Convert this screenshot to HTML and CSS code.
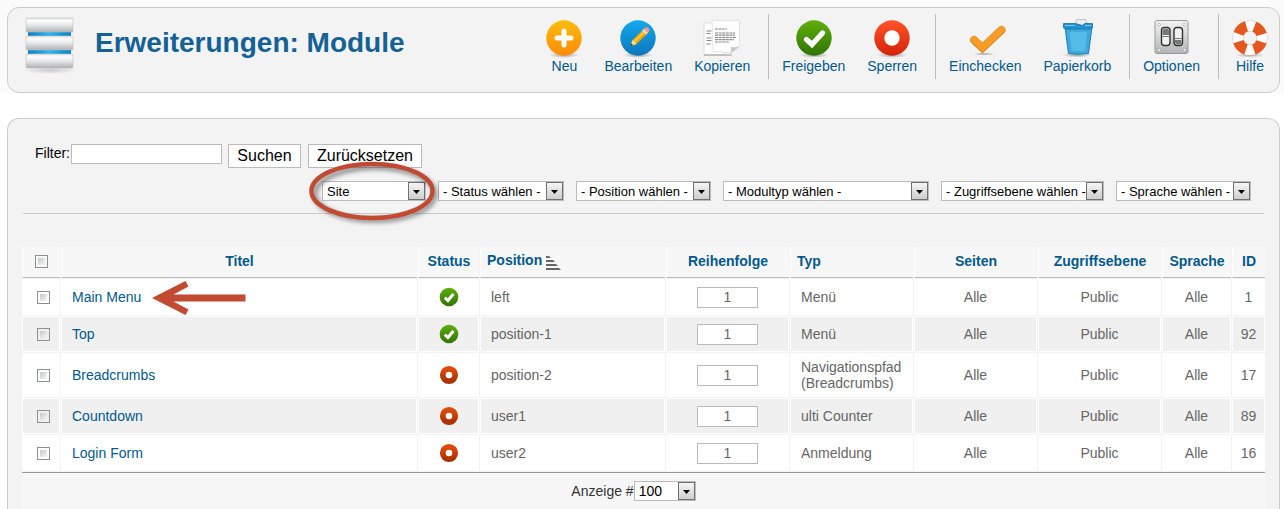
FILE: index.html
```
<!doctype html>
<html lang="de-de">
  <head>
    <meta charset="utf-8">
    <meta name="viewport" content="width=device-width">
    <title>Erweiterungen: Module</title>
    <link rel="stylesheet" href="styles.css">
  </head>
  <body>
    <svg class="defs" width="0" height="0">
      <defs>
        <linearGradient id="g-orange" x1="0" y1="0" x2="0" y2="1"><stop offset="0" stop-color="#ffbd0a"/><stop offset="1" stop-color="#ff8a06"/></linearGradient>
        <linearGradient id="g-blue" x1="0" y1="0" x2="0" y2="1"><stop offset="0" stop-color="#13a9ec"/><stop offset="1" stop-color="#0b76bd"/></linearGradient>
        <linearGradient id="g-green" x1="0" y1="0" x2="0" y2="1"><stop offset="0" stop-color="#5fae0c"/><stop offset="1" stop-color="#2f7403"/></linearGradient>
        <linearGradient id="g-red" x1="0" y1="0" x2="0" y2="1"><stop offset="0" stop-color="#ff5328"/><stop offset="1" stop-color="#d42208"/></linearGradient>
        <linearGradient id="g-rust" x1="0" y1="0" x2="0" y2="1"><stop offset="0" stop-color="#de4a08"/><stop offset="1" stop-color="#ab3204"/></linearGradient>
        <linearGradient id="g-metal" x1="0" y1="0" x2="0" y2="1"><stop offset="0" stop-color="#f4f4f4"/><stop offset="1" stop-color="#b2b4b5"/></linearGradient>
        <linearGradient id="g-bar" x1="0" y1="0" x2="0" y2="1"><stop offset="0" stop-color="#e4e4e4"/><stop offset=".2" stop-color="#fdfdfd"/><stop offset=".5" stop-color="#e6e7e8"/><stop offset="1" stop-color="#adb0b3"/></linearGradient>
        <linearGradient id="g-gap" x1="0" y1="0" x2="1" y2="0"><stop offset="0" stop-color="#0a80c4"/><stop offset=".5" stop-color="#2fb4ee"/><stop offset="1" stop-color="#0a80c4"/></linearGradient>
        <radialGradient id="g-shadow"><stop offset="0" stop-color="#888" stop-opacity=".8"/><stop offset="1" stop-color="#888" stop-opacity="0"/></radialGradient>
        <symbol id="published" viewBox="0 0 20 20"><circle cx="10" cy="10" r="9.3" fill="url(#g-green)"/><path d="M5.8 10.7 8.9 13.5 14.4 7" fill="none" stroke="#fff" stroke-width="3"/></symbol>
        <symbol id="unpublished" viewBox="0 0 20 20"><circle cx="10" cy="10" r="6.2" fill="#fff" stroke="url(#g-rust)" stroke-width="5.8"/></symbol>
      </defs>
    </svg>

    <div id="toolbar-box">
      <header class="header">
        <svg class="logo" width="54" height="62" viewBox="0 0 54 62">
          <ellipse cx="28" cy="54" rx="27" ry="4" fill="url(#g-shadow)" opacity=".5"/>
          <path d="M6 15h43v5H6zM6 33h43v5H6z" fill="url(#g-gap)"/>
          <rect x="4" y="2" width="47" height="14" rx="1" fill="url(#g-bar)" stroke="#c0c2c4" stroke-width=".6"/>
          <rect x="4" y="20" width="47" height="14" rx="1" fill="url(#g-bar)" stroke="#c0c2c4" stroke-width=".6"/>
          <rect x="4" y="38" width="47" height="14" rx="1" fill="url(#g-bar)" stroke="#c0c2c4" stroke-width=".6"/>
        </svg>
        <h1>Erweiterungen: Module</h1>
        <nav class="toolbar">
          <a href="#">
            <svg width="36" height="38" viewBox="0 0 36 38"><ellipse cx="18" cy="35" rx="15" ry="3" fill="url(#g-shadow)"/><circle cx="18" cy="18" r="17.7" fill="url(#g-orange)"/><path d="M18 11v14M11 18h14" stroke="#fff" stroke-width="5" stroke-linecap="round"/></svg>
            Neu</a>
          <a href="#">
            <svg width="36" height="38" viewBox="0 0 36 38"><ellipse cx="18" cy="35" rx="15" ry="3" fill="url(#g-shadow)"/><circle cx="18" cy="18" r="17.7" fill="url(#g-blue)"/><path d="M10.5 26l2-6L24 9l4 4-11.500 11z" fill="#f6a800"/><path d="M14 22 25.500 10.500" stroke="#ffd34d" stroke-width="1.500"/><path d="M23 9.500l2-2q2-1 3.500.8t.5 3.500l-2 2z" fill="#ee9c8c"/><path d="M22 10.500l1.500-1.500 4 4-1.500 1.500z" fill="#dcdcdc"/><path d="M10.500 26l2-6 4 4z" fill="#f8dba0"/><path d="M10.500 26l.8-2.500 1.700 1.600z" fill="#222"/></svg>
            Bearbeiten</a>
          <a href="#">
            <svg width="36" height="38" viewBox="0 0 36 38"><path d="M0 3h20v32H0z" fill="#fff" stroke="#ddd"/><path d="M0 35h28" stroke="#999"/><path d="M2.500 11h5M2.500 13.500h4M2.500 18h5M2.500 20.500h5M2.500 24h4" stroke="#888" stroke-width="1.200"/><path d="M8 .5h27.500V26q-3 4-9 7-9-2-17.500-1z" fill="#fdfdfd" stroke="#ddd" stroke-width=".8"/><path d="M26 33q2-4 .5-6 5 1 9-1-3 4-9.500 7z" fill="#c8c8c8"/><path d="M11 9h12M11 13h20M11 15.200h20M11 17.500h21M11 19.700h19M11 22h14" stroke="#8a8a8a" stroke-width="1.200" stroke-dasharray="3 .6"/></svg>
            Kopieren</a>
          <span class="divider"></span>
          <a href="#">
            <svg width="36" height="38" viewBox="0 0 36 38"><ellipse cx="18" cy="35" rx="15" ry="3" fill="url(#g-shadow)"/><circle cx="18" cy="18" r="17.700" fill="url(#g-green)"/><path d="M10.500 19.500 16 24.500 26.500 13" fill="none" stroke="#fff" stroke-width="5.200" stroke-linecap="round"/></svg>
            Freigeben</a>
          <a href="#">
            <svg width="36" height="38" viewBox="0 0 36 38"><ellipse cx="18" cy="35" rx="15" ry="3" fill="url(#g-shadow)"/><circle cx="18" cy="18" r="17.700" fill="url(#g-red)"/><circle cx="18" cy="18" r="7.700" fill="#fff"/></svg>
            Sperren</a>
          <span class="divider"></span>
          <a href="#">
            <svg width="36" height="38" viewBox="0 0 36 38"><ellipse cx="17" cy="34" rx="11" ry="1.500" fill="url(#g-shadow)"/><path d="M7 20 15.500 28 34.500 10" fill="none" stroke="#e08a1c" stroke-width="8" stroke-linecap="round"/><path d="M7 19.500 15.500 27.500 34.500 9.500" fill="none" stroke="#fa9d28" stroke-width="6.500" stroke-linecap="round"/></svg>
            Einchecken</a>
          <a href="#">
            <svg width="36" height="38" viewBox="0 0 36 38"><ellipse cx="18" cy="35" rx="15" ry="2.500" fill="url(#g-shadow)"/><path d="M16 5 18-1l4 1 4-1 4 7z" fill="#eee" stroke="#aaa" stroke-width=".7"/><path d="M6 7h27l-3.500 26.500q-10 1.500-20 0z" fill="#3fa9de" stroke="#1b80b8"/><path d="M10.500 12h17.500l-2 19H12.500z" fill="#55bbe9"/><path d="M4.500 3.500h12l7 2 2-2h8v4.500l-2 1h-25l-2-1z" fill="#2492cc" stroke="#176fa5" stroke-width=".8"/><path d="M6 5.500h10M26 5.500h6" stroke="#72ccf3"/></svg>
            Papierkorb</a>
          <span class="divider"></span>
          <a href="#">
            <svg width="36" height="38" viewBox="0 0 36 38"><rect x="1" y=".5" width="33" height="33" rx="2" fill="url(#g-metal)" stroke="#999"/><g fill="#fafafa" stroke="#999" stroke-width=".6"><circle cx="5" cy="4.500" r="1.500"/><circle cx="30.500" cy="4.500" r="1.500"/><circle cx="5" cy="30" r="1.500"/><circle cx="30.500" cy="30" r="1.500"/></g><g fill="#f2f2f2" stroke="#333" stroke-width="1.400"><rect x="7.500" y="7.500" width="8.500" height="18" rx="3"/><rect x="20" y="7.500" width="8.500" height="18" rx="3"/></g><path d="M8.500 10q3.500-3 6.500 0v5h-6.500zM21 20h6.500v3q-3 3.500-6.500 0z" fill="#777"/><path d="M8 16.500h7.500M20.500 18.500h7.500" stroke="#777"/></svg>
            Optionen</a>
          <span class="divider"></span>
          <a href="#">
            <svg width="36" height="38" viewBox="0 0 36 38"><ellipse cx="18" cy="35" rx="14" ry="2.500" fill="url(#g-shadow)"/><circle cx="18" cy="18" r="12" fill="none" stroke="#c4c4c4" stroke-width="11"/><circle cx="18" cy="18" r="12" fill="none" stroke="#fff" stroke-width="10"/><circle cx="18" cy="18" r="12.200" fill="none" stroke="#e4571f" stroke-width="10.500" stroke-dasharray="11.160 8" stroke-dashoffset="-4"/></svg>
            Hilfe</a>
        </nav>
      </header>
    </div>

    <main class="element-box">
      <form id="filter-bar">
        <div class="filter-search">
          <label for="filter_search">Filter:</label>
          <input type="text" id="filter_search">
          <button type="button" class="search">Suchen</button>
          <button type="button" class="reset">Zurücksetzen</button>
        </div>
        <div class="filter-select">
          <div class="marked">
            <select class="w-site" aria-label="Bereich"><option>Site</option></select>
            <svg class="ring" width="136" height="70" viewBox="0 0 136 70">
              <ellipse cx="69" cy="37" rx="60" ry="26.500" fill="none" stroke="#000" stroke-opacity=".4" stroke-width="5" class="ring-shadow"/>
              <ellipse cx="66" cy="34" rx="60.500" ry="27" fill="none" stroke="#c14b32" stroke-width="4.500"/>
            </svg>
          </div>
          <select class="w-status" aria-label="Status"><option>- Status wählen -</option></select>
          <select class="w-position" aria-label="Position"><option>- Position wählen -</option></select>
          <select class="w-type" aria-label="Modultyp"><option>- Modultyp wählen -</option></select>
          <select class="w-access" aria-label="Zugriffsebene"><option>- Zugriffsebene wählen -</option></select>
          <select class="w-language" aria-label="Sprache"><option>- Sprache wählen -</option></select>
        </div>
      </form>

      <table class="adminlist">
        <colgroup>
          <col class="c-check"><col><col class="c-status"><col class="c-position"><col class="c-wide"><col class="c-wide"><col class="c-wide"><col class="c-wide"><col class="c-lang"><col class="c-id">
        </colgroup>
        <thead>
          <tr>
            <th><input type="checkbox" aria-label="Alle auswählen"></th>
            <th><a href="#">Titel</a></th>
            <th><a href="#">Status</a></th>
            <th class="left"><a href="#">Position <svg width="15" height="14" viewBox="0 0 15 14"><path d="M0 0h3l2 2H0zM0 4h7l2 2H0zM0 8h10l2 2H0zM0 12h13l2 2H0z" fill="#666"/></svg></a></th>
            <th><a href="#">Reihenfolge</a></th>
            <th class="left"><a href="#">Typ</a></th>
            <th><a href="#">Seiten</a></th>
            <th><a href="#">Zugriffsebene</a></th>
            <th><a href="#">Sprache</a></th>
            <th><a href="#">ID</a></th>
          </tr>
        </thead>
        <tbody>
          <tr>
            <td class="check"><input type="checkbox" aria-label="Main Menu"></td>
            <td class="title">
              <a href="#">Main Menu</a>
              <svg class="pointer" width="94" height="36" viewBox="0 0 94 36"><path d="M0 18 33.500 1l3 5.500L21.500 14.500H93.500v7H21.500l15 8-3 5.500z" fill="#c14b32"/></svg>
            </td>
            <td class="center"><a href="#" aria-label="Freigegeben"><svg width="20" height="20"><use href="#published"/></svg></a></td>
            <td>left</td>
            <td class="center"><input type="text" class="order" value="1" aria-label="Reihenfolge"></td>
            <td>Menü</td>
            <td class="center">Alle</td>
            <td class="center">Public</td>
            <td class="center">Alle</td>
            <td class="center">1</td>
          </tr>
          <tr>
            <td class="check"><input type="checkbox" aria-label="Top"></td>
            <td class="title"><a href="#">Top</a></td>
            <td class="center"><a href="#" aria-label="Freigegeben"><svg width="20" height="20"><use href="#published"/></svg></a></td>
            <td>position-1</td>
            <td class="center"><input type="text" class="order" value="1" aria-label="Reihenfolge"></td>
            <td>Menü</td>
            <td class="center">Alle</td>
            <td class="center">Public</td>
            <td class="center">Alle</td>
            <td class="center">92</td>
          </tr>
          <tr>
            <td class="check"><input type="checkbox" aria-label="Breadcrumbs"></td>
            <td class="title"><a href="#">Breadcrumbs</a></td>
            <td class="center"><a href="#" aria-label="Gesperrt"><svg width="20" height="20"><use href="#unpublished"/></svg></a></td>
            <td>position-2</td>
            <td class="center"><input type="text" class="order" value="1" aria-label="Reihenfolge"></td>
            <td>Navigationspfad (Breadcrumbs)</td>
            <td class="center">Alle</td>
            <td class="center">Public</td>
            <td class="center">Alle</td>
            <td class="center">17</td>
          </tr>
          <tr>
            <td class="check"><input type="checkbox" aria-label="Countdown"></td>
            <td class="title"><a href="#">Countdown</a></td>
            <td class="center"><a href="#" aria-label="Gesperrt"><svg width="20" height="20"><use href="#unpublished"/></svg></a></td>
            <td>user1</td>
            <td class="center"><input type="text" class="order" value="1" aria-label="Reihenfolge"></td>
            <td>ulti Counter</td>
            <td class="center">Alle</td>
            <td class="center">Public</td>
            <td class="center">Alle</td>
            <td class="center">89</td>
          </tr>
          <tr>
            <td class="check"><input type="checkbox" aria-label="Login Form"></td>
            <td class="title"><a href="#">Login Form</a></td>
            <td class="center"><a href="#" aria-label="Gesperrt"><svg width="20" height="20"><use href="#unpublished"/></svg></a></td>
            <td>user2</td>
            <td class="center"><input type="text" class="order" value="1" aria-label="Reihenfolge"></td>
            <td>Anmeldung</td>
            <td class="center">Alle</td>
            <td class="center">Public</td>
            <td class="center">Alle</td>
            <td class="center">16</td>
          </tr>
        </tbody>
        <tfoot>
          <tr>
            <td colspan="10">
              <div class="limit"><label for="limit">Anzeige #</label><select id="limit"><option>100</option></select></div>
            </td>
          </tr>
        </tfoot>
      </table>
    </main>
  </body>
</html>
```

FILE: styles.css
```
html, body { margin: 0; padding: 0; background: #fff; color: #000; font-family: Arial, "Liberation Sans", sans-serif; font-size: 14px; line-height: 16px; }
* { box-sizing: border-box; }
a { color: #025a8d; text-decoration: none; }
input, select, button { font-family: inherit; margin: 0; border: 1px solid #bbb; border-radius: 0; background: #fff; color: #000; }
.defs { position: absolute; }

/* header */
#toolbar-box { padding: 7px 4px 0 7px; background: #fbfbfb; }
.header { display: flex; align-items: flex-start; height: 86px; background: #f3f3f3; border: 1px solid #ccc; border-radius: 12px; }
.logo { flex: none; margin: 8px 11px 0 14px; }
.header h1 { margin: 0 auto 0 8px; font-size: 28px; line-height: 70px; color: #146295; white-space: nowrap; }
.toolbar { display: flex; padding-top: 6px; }
.toolbar a { padding: 6px 11px 0; text-align: center; white-space: nowrap; }
.toolbar a svg { display: block; margin: 0 auto; overflow: visible; }
.divider { width: 1px; height: 65px; margin: 0 2px 0 7px; background: #bbb; }

/* filter */
.element-box { margin: 25px 4px 0 7px; padding: 25px 13px 0; background: #f3f3f3; border: 1px solid #ccc; border-bottom: 0; border-radius: 12px 12px 0 0; }
#filter-bar { margin: 0 2px 32px; padding-bottom: 12px; border-bottom: 1px solid #ccc; }
.filter-search { display: flex; align-items: flex-start; padding-left: 12px; }
.filter-search label { width: 36px; line-height: 18px; }
.filter-search input { width: 151px; height: 20px; margin-right: 6px; }
.filter-search button { height: 24px; padding: 0; font-size: 16px; }
.filter-search .search { width: 73px; margin-right: 7px; }
.filter-search .reset { width: 114px; }
.filter-select { display: flex; justify-content: flex-end; gap: 12px; margin-top: 13px; padding-right: 13px; }
select {
  appearance: none; display: block; height: 20px; padding: 0 17px 0 4px; font-size: 13px;
  background: #fff url("data:image/svg+xml,%3Csvg xmlns='http://www.w3.org/2000/svg' width='17' height='18'%3E%3ClinearGradient id='g' x2='0' y2='1'%3E%3Cstop stop-color='%23f6f6f6'/%3E%3Cstop offset='1' stop-color='%23cdcdcd'/%3E%3C/linearGradient%3E%3Crect x='.5' y='.5' width='16' height='17' fill='url(%23g)' stroke='%23707070'/%3E%3Cpath d='M5 8h7l-3.500 4z'/%3E%3C/svg%3E") no-repeat right center;
}
.w-site { width: 104px; }
.w-status { width: 126px; }
.w-position { width: 135px; }
.w-type { width: 206px; }
.w-access { width: 163px; }
.w-language { width: 135px; }
.marked { position: relative; }
.ring { position: absolute; left: -16px; top: -24px; pointer-events: none; }
.ring-shadow { filter: blur(2px); }

/* list */
.adminlist { width: 100%; table-layout: fixed; border-spacing: 1px; background: #f3f3f3; color: #666; }
.c-check { width: 38px; }
.c-status { width: 61px; }
.c-position { width: 185px; }
.c-wide { width: 123px; }
.c-lang { width: 69px; }
.c-id { width: 33px; }
.adminlist th { height: 31px; padding: 0 0 2px; background: #f7f7f7; border-bottom: 1px solid #bbb; border-left: 1px solid #fff; }
.adminlist th.left { padding-left: 6px; text-align: left; }
.adminlist th svg { vertical-align: -5px; }
.adminlist td { height: 36px; padding: 5px 10px; background: #fff; border: 1px solid #fff; }
.adminlist tbody tr:nth-child(even) td { background: #f0f0f0; }
.adminlist td.center { padding: 5px 0; text-align: center; }
.adminlist td.check { padding: 0 0 0 14px; }
.adminlist td svg { display: block; margin: 0 auto; }
.adminlist td.title { position: relative; }
.adminlist td .pointer { position: absolute; left: 90px; top: 0; }
input[type=checkbox] { appearance: none; display: block; width: 13px; height: 13px; border: 1px solid #8e8f8f; background: linear-gradient(135deg, #c4c8cc, #f6f6f6) content-box #f4f4f4; padding: 2px; }
th input[type=checkbox] { margin: 0 auto; }
.order { display: block; width: 61px; height: 21px; margin: 0 auto; padding: 0; text-align: center; font-size: 14px; color: #666; }
.adminlist tfoot td { height: 37px; padding: 0 20px 0 0; background: #f7f7f7; border: 0; border-top: 1px solid #999; color: #333; }
.limit { display: flex; align-items: center; justify-content: center; }
.limit select { width: 62px; font-size: 14px; }
```
